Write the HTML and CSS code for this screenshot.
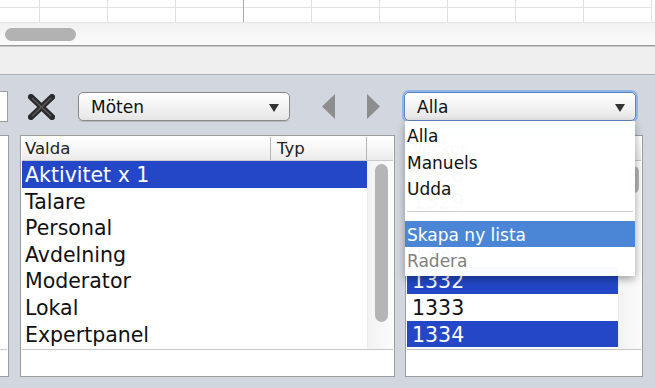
FILE: index.html
```html
<!DOCTYPE html>
<html lang="sv">
<head>
    <meta charset="UTF-8">
    <title>Aktiviteter</title>
    <link rel="stylesheet" href="styles.css">
</head>
<body>

    <div class="sheet">
        <div class="cell first"></div>
        <div class="cell"></div>
        <div class="cell"></div>
        <div class="cell dark"></div>
        <div class="cell"></div>
        <div class="cell"></div>
        <div class="cell"></div>
        <div class="cell"></div>
        <div class="cell"></div>
        <div class="cell"></div>
    </div>
    <div class="hscroll"><div class="hthumb"></div></div>
    <div class="strip"></div>

    <main class="panel">
        <div class="toolbar">
            <div class="field"></div>
            <svg class="remove" width="27" height="26" viewBox="0 0 27 26">
                <path d="M3 3 L24 23 M24 3 L3 23" stroke="#2b2b2b" stroke-width="6" stroke-linecap="square"/>
                <path d="M4 4 L23 22 M23 4 L4 22" stroke="#5a5a5a" stroke-width="1.5"/>
            </svg>
            <div class="popup moten">
                <span>Möten</span>
                <i class="caret"></i>
            </div>
            <svg class="nav prev" width="13" height="25" viewBox="0 0 13 25">
                <polygon points="13,0 13,25 0,12.5" fill="#8d8d8d"/>
            </svg>
            <svg class="nav next" width="13" height="25" viewBox="0 0 13 25">
                <polygon points="0,0 0,25 13,12.5" fill="#8d8d8d"/>
            </svg>
            <div class="popup alla">
                <span>Alla</span>
                <i class="caret"></i>
                <div class="menu">
                    <div class="item">Alla</div>
                    <div class="item">Manuels</div>
                    <div class="item">Udda</div>
                    <div class="sep"></div>
                    <div class="item hl">Skapa ny lista</div>
                    <div class="item off">Radera</div>
                </div>
            </div>
        </div>

        <div class="lists">
            <div class="list stub">
                <div class="table"></div>
            </div>

            <div class="list main">
                <div class="table">
                    <div class="thead">
                        <div class="th valda">Valda</div>
                        <div class="th typ">Typ</div>
                    </div>
                    <div class="tbody">
                        <div class="rows">
                            <div class="row sel">Aktivitet x 1</div>
                            <div class="row">Talare</div>
                            <div class="row">Personal</div>
                            <div class="row">Avdelning</div>
                            <div class="row">Moderator</div>
                            <div class="row">Lokal</div>
                            <div class="row">Expertpanel</div>
                        </div>
                        <div class="vscroll"><div class="vthumb long"></div></div>
                    </div>
                </div>
            </div>

            <div class="list weeks">
                <div class="table">
                    <div class="thead">
                        <div class="th veckor">Veckor</div>
                    </div>
                    <div class="tbody">
                        <div class="rows">
                            <div class="row num">1328</div>
                            <div class="row num">1329</div>
                            <div class="row num">1330</div>
                            <div class="row num">1331</div>
                            <div class="row num sel">1332</div>
                            <div class="row num">1333</div>
                            <div class="row num sel">1334</div>
                        </div>
                        <div class="vscroll"><div class="vthumb short"></div></div>
                    </div>
                </div>
            </div>
        </div>
    </main>

</body>
</html>
```

FILE: styles.css
```css
body {
    margin: 0;
    width: 655px;
    height: 388px;
    overflow: hidden;
    font-family: "DejaVu Sans", Verdana, sans-serif;
    color: #111;
    background-color: #d2d7df;
}

/* spreadsheet strip at the top */
.sheet {
    display: flex;
    height: 22px;
    background-color: #fff;
    overflow: hidden;
}

.cell {
    flex: none;
    width: 67px;
    border-right: 1px solid #e0e0e0;
    background: linear-gradient(#fff 7px, #e2e2e2 7px, #e2e2e2 8px, #fff 8px);
}

.cell.first {
    width: 39px;
}

.cell.dark {
    border-right-color: #a8a8a8;
}

.hscroll {
    height: 24px;
    border-top: 1px solid #e4e4e4;
    border-bottom: 1px solid #989898;
    background: linear-gradient(#f1f1f1, #fbfbfb);
    box-sizing: border-box;
    padding: 5px 0 0 5px;
}

.hthumb {
    width: 71px;
    height: 13px;
    border-radius: 7px;
    background-color: #b2b2b2;
}

.strip {
    height: 29px;
    border-top: 1px solid #c9c9c9;
    border-bottom: 1px solid #aab0b9;
    background-color: #efefef;
    box-sizing: border-box;
}

/* lower panel */
.panel {
    padding-top: 17px;
}

.toolbar {
    display: flex;
    align-items: center;
    height: 29px;
}

.field {
    width: 8px;
    height: 31px;
    background-color: #fff;
    border: 1px solid #9c9c9c;
    border-left: none;
    box-sizing: border-box;
}

.remove {
    margin-left: 20px;
}

.popup {
    position: relative;
    display: flex;
    align-items: center;
    justify-content: space-between;
    height: 29px;
    box-sizing: border-box;
    border: 1px solid #8a8a8a;
    border-radius: 5px;
    background: linear-gradient(#ffffff, #f3f3f3 50%, #e6e6e6);
    box-shadow: 0 1px 1px rgba(0, 0, 0, 0.15);
    font-size: 17px;
}

.popup.moten {
    margin-left: 23px;
    width: 212px;
    padding: 0 10px 0 12px;
}

.popup.alla {
    margin-left: 24px;
    width: 232px;
    padding: 0 10px 0 12px;
    border-color: #5f86c4;
    box-shadow: 0 0 0 2px #8fb4e6;
}

.caret {
    width: 0;
    height: 0;
    border-left: 5px solid transparent;
    border-right: 5px solid transparent;
    border-top: 8px solid #333;
    margin-top: 2px;
}

.nav.prev {
    margin-left: 32px;
}

.nav.next {
    margin-left: 32px;
}

/* open popup menu */
.menu {
    position: absolute;
    top: 28px;
    left: 0;
    width: 230px;
    padding: 1px 0 2px;
    background-color: rgba(255, 255, 255, 0.98);
    box-shadow: 0 3px 8px rgba(0, 0, 0, 0.35);
    z-index: 2;
}

.menu .item {
    height: 26.5px;
    line-height: 24.5px;
    padding: 2px 0 0 2px;
    box-sizing: border-box;
    font-size: 17px;
    color: #111;
}

.menu .item.hl {
    background-color: #4b86d6;
    color: #fff;
}

.menu .item.off {
    color: #808080;
}

.menu .sep {
    height: 9px;
    margin: 0 2px 9px;
    border-bottom: 1px solid #cdcdcd;
}

/* lists */
.lists {
    display: flex;
    margin-top: 14px;
    height: 242px;
}

.list {
    flex: none;
    background-color: #fff;
    border: 1px solid #9e9e9e;
    padding: 1px;
    box-sizing: border-box;
}

.list.stub {
    width: 9px;
    border-left: none;
    padding-left: 0;
}

.list.main {
    margin-left: 11px;
    width: 375px;
}

.list.weeks {
    margin-left: 10px;
    width: 238px;
}

.table {
    height: 212px;
    border-bottom: 1px solid #c8c8c8;
    overflow: hidden;
}

.thead {
    display: flex;
    height: 23px;
    border-bottom: 1px solid #cacaca;
    background: linear-gradient(#ffffff, #f4f4f4 60%, #ebebeb);
    font-size: 16.5px;
    color: #222;
}

.th {
    line-height: 23px;
    padding-left: 3px;
    box-sizing: border-box;
}

.th.valda {
    width: 249px;
    border-right: 1px solid #b4b4b4;
}

.th.typ {
    width: 96px;
    padding-left: 6px;
    border-right: 1px solid #b4b4b4;
}

.th.veckor {
    padding-left: 5px;
}

.tbody {
    display: flex;
}

.rows {
    flex: none;
}

.main .rows {
    width: 345px;
}

.weeks .rows {
    width: 211px;
}

.row {
    height: 26.6px;
    line-height: 23.6px;
    padding: 3px 0 0 3px;
    box-sizing: border-box;
    font-size: 20.5px;
    white-space: nowrap;
}

.row.num {
    padding-left: 5px;
}

.row.sel {
    background-color: #2347c6;
    color: #fff;
}

.vscroll {
    flex: 1;
    height: 189px;
    background: linear-gradient(90deg, #f3f3f3, #fbfbfb);
    border-left: 1px solid #ececec;
}

.vthumb {
    width: 13px;
    border-radius: 7px;
    background-color: #b5b5b5;
}

.vthumb.long {
    margin: 3px 0 0 7px;
    height: 158px;
}

.vthumb.short {
    margin: 5px 0 0 9px;
    width: 11px;
    height: 27px;
}
```
